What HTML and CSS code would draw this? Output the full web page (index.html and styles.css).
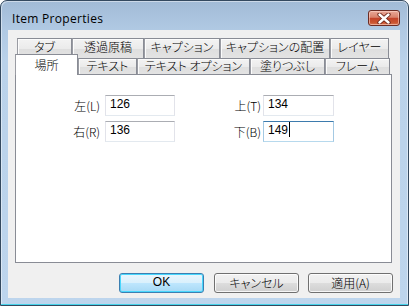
FILE: index.html
```html
<!DOCTYPE html>
<html lang="ja">
<head>
<meta charset="utf-8">
<title>Item Properties</title>
<link rel="stylesheet" href="styles.css">
</head>
<body>
<div class="window">
  <div class="titlebar">
    <span class="title">Item Properties</span>
    <div class="close">
      <svg width="14" height="11" viewBox="0 0 14 11">
        <path d="M2.5 1.5 L11.5 9.5 M11.5 1.5 L2.5 9.5" stroke="#6a2418" stroke-width="4.2" stroke-linecap="round"/>
        <path d="M2.5 1.5 L11.5 9.5 M11.5 1.5 L2.5 9.5" stroke="#ffffff" stroke-width="2.4" stroke-linecap="round"/>
      </svg>
    </div>
  </div>
  <div class="client">
    <div class="tabs">
      <div class="row row1">
        <div class="tab w-tab">タブ</div>
        <div class="tab w-toka">透過原稿</div>
        <div class="tab w-cap">キャプション</div>
        <div class="tab w-capp">キャプションの配置</div>
        <div class="tab w-layer">レイヤー</div>
      </div>
      <div class="row row2">
        <div class="tab selected w-basho">場所</div>
        <div class="tab w-text">テキスト</div>
        <div class="tab w-topt">テキスト オプション</div>
        <div class="tab w-fill">塗りつぶし</div>
        <div class="tab w-frame">フレーム</div>
      </div>
      <div class="panel">
        <div class="fields">
          <label class="lbl lbl-left">左(L)</label>
          <div class="input in-left">126</div>
          <label class="lbl lbl-right">上(T)</label>
          <div class="input in-right">134</div>
          <label class="lbl lbl-left">右(R)</label>
          <div class="input in-left">136</div>
          <label class="lbl lbl-right">下(B)</label>
          <div class="input in-right focused">149<span class="caret"></span></div>
        </div>
      </div>
    </div>
    <div class="buttons">
      <div class="btn default">OK</div>
      <div class="btn">キャンセル</div>
      <div class="btn">適用(A)</div>
    </div>
  </div>
</div>
</body>
</html>
```

FILE: styles.css
```css
html, body {
  margin: 0;
  padding: 0;
  background: #ffffff;
}

body {
  font-family: "Noto Sans CJK JP", "Noto Sans", sans-serif;
  font-size: 12px;
  font-weight: 300;
  font-feature-settings: "palt";
  color: #000;
}

.window {
  width: 409px;
  height: 306px;
  box-sizing: border-box;
  border: 1px solid #34495f;
  border-radius: 7px 7px 0 0;
  background: linear-gradient(180deg, #a2bbd6 0px, #b0c9e3 28px, #bad2ea 60px, #bdd5ed 100%);
  box-shadow: inset 0 -1px 0 #46d3ea, inset 1px 1px 0 rgba(255,255,255,0.45), inset -1px 0 0 rgba(255,255,255,0.45);
  display: flex;
  flex-direction: column;
  overflow: hidden;
}

.titlebar {
  height: 29px;
  box-sizing: border-box;
  padding: 5px 8px 0 11px;
  display: flex;
  align-items: center;
  justify-content: space-between;
}

.title {
  font-family: "Open Sans", "Noto Sans", sans-serif;
  font-weight: 400;
  font-size: 12px;
  color: #000;
  letter-spacing: 0.3px;
}

.close {
  width: 32px;
  height: 16px;
  box-sizing: border-box;
  border: 1px solid #6b2c24;
  border-radius: 3px;
  background: linear-gradient(180deg, #e9a898 0%, #d9826c 45%, #c4432a 52%, #c9532f 80%, #d77452 100%);
  box-shadow: inset 0 0 0 1px rgba(255,220,210,0.55);
  display: flex;
  align-items: center;
  justify-content: center;
}

.close svg {
  display: block;
}

.client {
  flex: 1;
  margin: 0 8px 7px 7px;
  background: #f0f0f0;
  display: flex;
  flex-direction: column;
}

.tabs {
  margin: 8px 0 0 7px;
  width: 377px;
}

.row {
  display: flex;
  height: 20px;
}

.row1 {
  padding-left: 2px;
}

.row2 {
  margin-top: -4px;
  align-items: flex-end;
}

.tab {
  box-sizing: border-box;
  height: 20px;
  border: 1px solid #898c95;
  border-bottom: none;
  border-left-color: #9a9ca3;
  background: linear-gradient(180deg, #f3f3f3 0%, #ebebeb 50%, #dedede 51%, #e3e3e3 100%);
  box-shadow: inset 1px 1px 0 #fcfcfc;
  text-align: center;
  line-height: 16px;
  white-space: nowrap;
}

.row2 .tab {
  height: 16px;
  line-height: 14px;
}

.row2 .tab.selected {
  height: 21px;
  margin-bottom: -1px;
  background: #ffffff;
  box-shadow: none;
  position: relative;
  z-index: 1;
  line-height: 19px;
}

.w-tab { width: 55px; }
.w-toka { width: 72px; }
.w-cap { width: 76px; }
.w-capp { width: 110px; }
.w-layer { width: 59px; }

.w-basho { width: 63px; }
.w-text { width: 59px; }
.w-topt { width: 113px; }
.w-fill { width: 75px; }
.w-frame { width: 65px; }

.panel {
  height: 189px;
  box-sizing: border-box;
  border: 1px solid #898c95;
  background: #ffffff;
  padding-top: 20px;
}

.fields {
  display: grid;
  grid-template-columns: 89px 70px 88px 71px;
  grid-auto-rows: 21px;
  row-gap: 5px;
}

.lbl {
  text-align: right;
  line-height: 21px;
}

.lbl-left {
  padding-right: 5px;
}

.lbl-right {
  padding-right: 2px;
}

.input {
  box-sizing: border-box;
  height: 21px;
  border: 1px solid #e2e3ea;
  border-top-color: #abadb3;
  border-bottom-color: #e3e9ef;
  background: #fff;
  padding-left: 4px;
  line-height: 17px;
  font-family: "Liberation Sans", "Noto Sans", sans-serif;
  font-weight: 400;
  font-size: 12px;
}

.input.focused {
  border-color: #a4c9e3;
  border-top-color: #3d7bad;
  border-bottom-color: #b7d9ed;
}

.caret {
  display: inline-block;
  width: 1px;
  height: 15px;
  background: #000;
  vertical-align: -3px;
  margin-left: 1px;
}

.buttons {
  display: flex;
  justify-content: flex-end;
  gap: 9px;
  margin-top: 10px;
  padding-right: 7px;
}

.btn {
  width: 85px;
  height: 20px;
  box-sizing: border-box;
  border: 1px solid #707070;
  border-radius: 3px;
  background: linear-gradient(180deg, #f2f2f2 0%, #ebebeb 50%, #dddddd 51%, #cfcfcf 100%);
  box-shadow: inset 0 0 0 1px rgba(255,255,255,0.8);
  text-align: center;
  line-height: 17px;
}

.btn.default {
  margin-right: 1px;
  border-color: #3c7fb1;
  background: linear-gradient(180deg, #eaf6fd 0%, #d9f0fc 50%, #bee6fd 51%, #a7d9f5 100%);
  box-shadow: inset 0 0 0 1px #48d7fd;
  font-family: "Liberation Sans", "Noto Sans", sans-serif;
  font-weight: 400;
}
```
